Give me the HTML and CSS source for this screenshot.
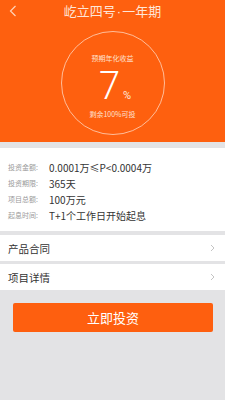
FILE: index.html
```html
<!DOCTYPE html>
<html lang="zh">
<head>
<meta charset="utf-8">
<link rel="stylesheet" href="styles.css">
</head>
<body>
<div class="page">
  <header class="hero">
    <div class="nav">
      <svg class="back" width="8" height="12" viewBox="0 0 8 12"><path d="M6.5 1 L1.5 6 L6.5 11" fill="none" stroke="#ffd2b8" stroke-width="1.2"/></svg>
      <div class="title">屹立四号<span class="dot">·</span>一年期</div>
    </div>
    <div class="ring">
      <div class="ring-label">预期年化收益</div>
      <div class="rate"><span class="num">7</span><span class="pct">%</span></div>
      <div class="ring-sub">剩余100%可投</div>
    </div>
  </header>
  <section class="info">
    <div class="row"><span class="lbl">投资金额:</span><span class="val">0.0001万≤P&lt;0.0004万</span></div>
    <div class="row"><span class="lbl">投资期限:</span><span class="val">365天</span></div>
    <div class="row"><span class="lbl">项目总额:</span><span class="val">100万元</span></div>
    <div class="row"><span class="lbl">起息时间:</span><span class="val">T+1个工作日开始起息</span></div>
  </section>
  <div class="link"><span>产品合同</span><svg width="5" height="8" viewBox="0 0 5 8"><path d="M1 1 L4 4 L1 7" fill="none" stroke="#c4c4c4" stroke-width="1"/></svg></div>
  <div class="link second"><span>项目详情</span><svg width="5" height="8" viewBox="0 0 5 8"><path d="M1 1 L4 4 L1 7" fill="none" stroke="#c4c4c4" stroke-width="1"/></svg></div>
  <div class="cta-wrap"><button class="cta">立即投资</button></div>
</div>
</body>
</html>
```
FILE: styles.css
```css
* { box-sizing: border-box; }
html, body { margin: 0; padding: 0; }
body {
  background: #e3e3e5;
  font-family: "Noto Sans CJK SC", "Noto Sans", sans-serif;
  width: 225px;
  height: 400px;
  overflow: hidden;
}
.hero {
  background: #fe600f;
  height: 142px;
  display: flex;
  flex-direction: column;
  align-items: center;
}
.nav {
  width: 100%;
  height: 22px;
  display: flex;
  align-items: center;
  justify-content: center;
  position: relative;
}
.back { position: absolute; left: 9px; top: 5px; }
.title {
  color: #ffe6d8;
  font-size: 13px;
  line-height: 22px;
}
.dot {
  font-family: "Liberation Sans", sans-serif;
  margin: 0 1px;
}
.ring {
  margin-top: 9px;
  width: 104px;
  height: 104px;
  border-radius: 50%;
  border: 1px solid rgba(255, 220, 200, 0.75);
  display: flex;
  flex-direction: column;
  align-items: center;
}
.ring-label {
  margin-top: 21px;
  font-size: 7px;
  line-height: 10px;
  color: #ffe0cf;
}
.rate {
  margin-top: 1px;
  display: flex;
  align-items: baseline;
  color: #fff;
  height: 45px;
}
.num {
  font-family: "Roboto", sans-serif;
  font-weight: 300;
  font-size: 38px;
  line-height: normal;
  margin-left: 5px;
}
.pct {
  font-family: "Roboto", sans-serif;
  font-size: 11px;
  line-height: normal;
  margin-left: 3px;
  color: #ffeadd;
}
.ring-sub {
  margin-top: 0;
  font-size: 7px;
  line-height: 10px;
  color: #ffe0cf;
}
.info {
  margin-top: 6px;
  background: #fff;
  padding: 11px 8px 8px;
  height: 83px;
}
.row {
  display: flex;
  align-items: center;
  height: 16px;
}
.lbl {
  width: 41px;
  font-size: 7px;
  color: #9a9a9a;
}
.val {
  font-size: 10px;
  color: #333;
}
.link {
  margin-top: 4px;
  background: #fff;
  height: 26px;
  display: flex;
  align-items: center;
  justify-content: space-between;
  padding: 0 10px 0 8px;
  font-size: 10.5px;
  color: #333;
}
.link.second { margin-top: 3px; }
.cta-wrap {
  padding: 13px 12px 0 13px;
}
.cta {
  display: block;
  width: 100%;
  height: 29px;
  border: none;
  border-radius: 2px;
  background: #fe5f0f;
  color: #fff;
  font-family: "Noto Sans CJK SC", sans-serif;
  font-size: 13px;
}
```
